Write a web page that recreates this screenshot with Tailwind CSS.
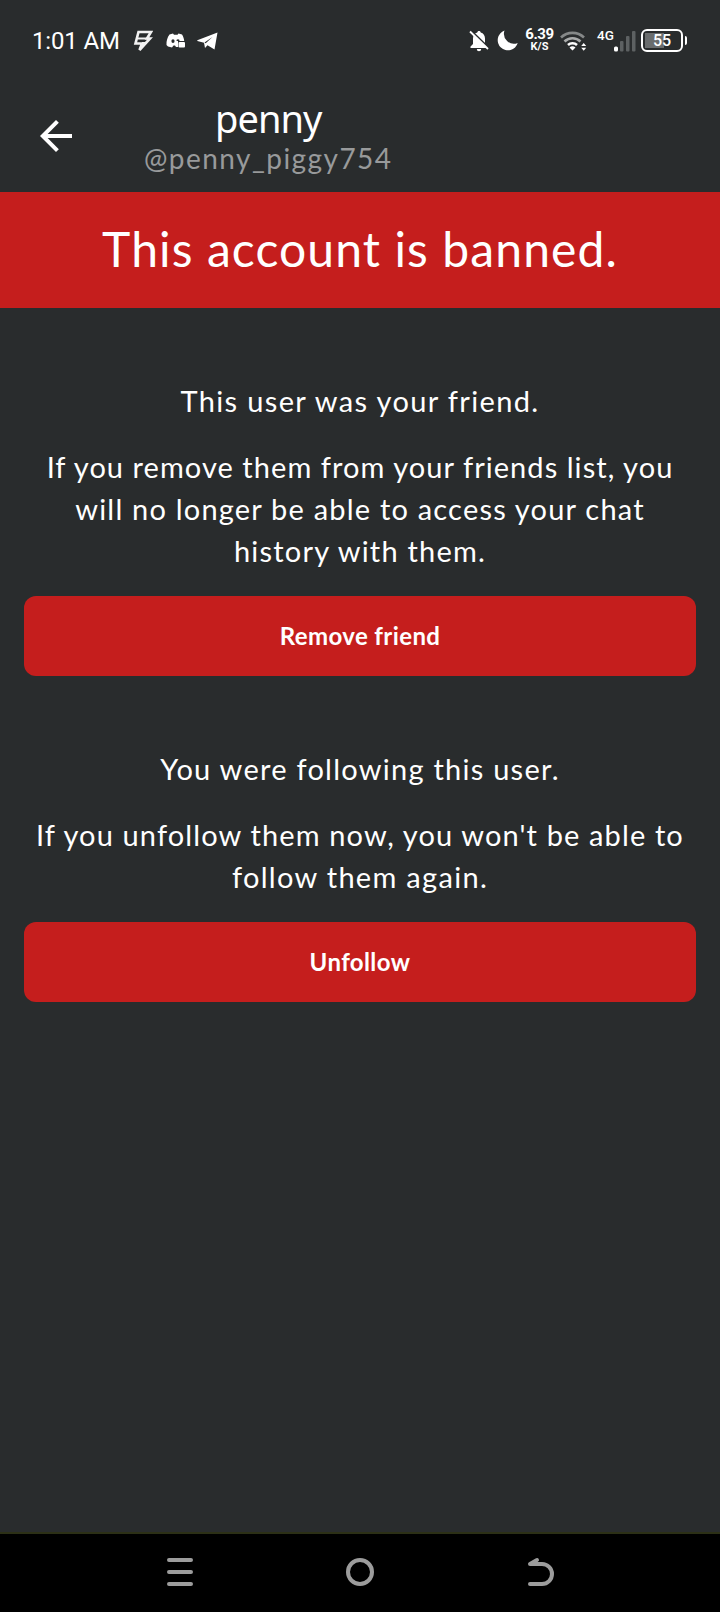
<!DOCTYPE html>
<html lang="en">
<head>
  <meta charset="UTF-8">
  <meta name="viewport" content="width=device-width, initial-scale=1.0">
  <title>penny</title>
  <script src="https://cdn.jsdelivr.net/npm/@tailwindcss/browser@4"></script>
</head>
<body class="bg-[#292c2d]">
  <div class="flex h-[1612px] w-[720px] flex-col overflow-hidden bg-[#292c2d] font-['Lato',sans-serif] text-white">

    <!-- Status bar -->
    <div class="flex h-20 shrink-0 items-center justify-between pt-px pr-[33px] pl-8 font-['Roboto',sans-serif]">
      <div class="flex items-center">
        <span class="w-[101px] pt-px text-2xl tracking-[-0.15px] whitespace-nowrap">1:01 AM</span>
        <svg class="h-[22px] w-5" viewBox="0 0 20 22" fill="none" stroke="#f2f2f2" stroke-width="2.6">
          <path d="M5.500 2H18l-4 6.500h3L6.500 20 9 13.500H2.500z" />
          <path d="M5 8.500h9M9 13h5" stroke-width="2.200" />
        </svg>
        <svg class="ml-[13px] h-4 w-5" viewBox="0 0 20 16" fill="#fff" fill-rule="evenodd">
          <path d="M3.500 1.500 7 .5l1 1.200h3.500l1-1.200 3.500 1c1.300 2 2 4.200 2.200 6.500h-6.200v6H10l-1-1.500H7.500L6 14.500 2 13.500.5 12C.3 8 1.300 4.500 3.500 1.500zM7 6.200a1.600 1.900 0 1 0 0 3.800 1.600 1.900 0 0 0 0-3.800zM12 6.200a1.500 1.500 0 0 0-1.500 1.800h3A1.500 1.500 0 0 0 12 6.200z" />
          <rect x="12.500" y="9" width="6.500" height="5.500" rx="1" />
        </svg>
        <svg class="ml-[11px] h-[18px] w-[21px]" viewBox="0 0 21 18" fill="#fff" fill-rule="evenodd">
          <path d="M20.500.5 17.500 17.500 10.500 13.300 8 16 7 10.800.3 9v-.8zM8.700 11.300 15.500 5 7.500 10.400z" />
        </svg>
      </div>

      <div class="flex items-center">
        <svg class="h-[22px] w-5" viewBox="0 0 20 22" fill="#fff">
          <path d="M10 1c1 0 1.700.6 1.700 1.500C14.500 3.300 16 5.500 16 8.500V14l2.500 2.500V18h-17v-1.500L4 14V8.500c0-3 1.500-5.200 4.300-6C8.300 1.600 9 1 10 1zM7.800 19h4.400a2.200 2.200 0 0 1-4.400 0z" />
          <path d="M2 .5 20 18" stroke="#292c2d" stroke-width="1.800" />
          <path d="M1 1.500 19 19" stroke="#fff" stroke-width="1.800" />
        </svg>
        <svg class="ml-2 h-[21px] w-[21px]" viewBox="0 0 21 21" fill="#fff">
          <path d="M7.500.5A10.200 10.200 0 1 0 20.700 13 10 10 0 0 1 7.500.5z" />
        </svg>
        <div class="-mt-[3px] ml-[7px] flex w-[29px] flex-col items-center font-bold">
          <span class="text-[15px] leading-[15px] tracking-[-0.4px]">6.39</span>
          <span class="text-[11px] leading-[10px]">K/S</span>
        </div>
        <svg class="ml-[6px] h-[22px] w-[27px]" viewBox="0 0 27 22" fill="none" stroke-width="2.600">
          <path d="M1 7.500a16.500 16.500 0 0 1 23 0" stroke="#858888" />
          <path d="M4.500 11.500a11.500 11.500 0 0 1 16 0" stroke="#a9abab" />
          <path d="M8 15a6.600 6.600 0 0 1 9 0" stroke="#fff" />
          <path d="m9.500 17.500 3 3 3-3a4.500 4.500 0 0 0-6 0zM21.200 16l2.500-3 2.500 3zM21.200 17.800l2.500 3 2.500-3z" fill="#fff" />
        </svg>
        <div class="ml-[10px] flex items-center">
          <span class="-mt-[11px] w-[17px] text-[13.5px] leading-4 font-medium">4G</span>
          <svg class="h-[22px] w-[22px]" viewBox="0 0 22 22">
            <rect x="0" y="16.500" width="4" height="5" rx="1.500" fill="#fff" />
            <g fill="#5d6162">
              <rect x="6" y="11" width="3.500" height="10.500" rx="1" />
              <rect x="12" y="6" width="3.500" height="15.500" rx="1" />
              <rect x="18" y="1" width="3.500" height="20.500" rx="1" />
            </g>
          </svg>
        </div>
        <div class="ml-[5px] flex items-center gap-[2px]">
          <div class="flex h-[23px] w-[42px] items-center justify-center rounded-[6px] border-2 border-white bg-[linear-gradient(#6a6d6e,#6a6d6e)] bg-size-[19px_15px] bg-position-[2px_2px] bg-no-repeat text-base leading-4 font-medium">55</div>
          <div class="h-[9px] w-[2px] rounded-r-sm bg-white"></div>
        </div>
      </div>
    </div>

    <!-- Header -->
    <header class="flex h-28 shrink-0 items-center pl-8">
      <svg class="size-12" viewBox="0 0 24 24" fill="#fff">
        <path d="M20 11H7.830l5.590-5.590L12 4l-8 8 8 8 1.410-1.410L7.830 13H20v-2z" />
      </svg>
      <div class="ml-[64px] text-center whitespace-nowrap">
        <h1 class="font-['Noto_Sans',sans-serif] text-[38px] leading-11 tracking-[-0.9px]">penny</h1>
        <p class="pt-px text-[28px] leading-[35px] tracking-[1.45px] text-[#989a9b]">@penny_piggy754</p>
      </div>
    </header>

    <div class="flex h-29 shrink-0 items-center justify-center bg-[#c51e1d] pb-[3px] text-5xl tracking-[1.1px] whitespace-nowrap">This account is banned.</div>

    <main class="flex-1 px-6 text-center text-[29px] leading-[42px] whitespace-nowrap">
      <section class="pt-18">
        <p class="tracking-[1.35px]">This user was your friend.</p>
        <p class="mt-6">
          <span class="block tracking-[1.05px]">If you remove them from your friends list, you</span>
          <span class="block tracking-[1.2px]">will no longer be able to access your chat</span>
          <span class="block tracking-[1.2px]">history with them.</span>
        </p>
        <button class="mt-6 block h-20 w-full rounded-xl bg-[#c51e1d] text-2xl font-bold tracking-[0.4px]">Remove friend</button>
      </section>

      <section class="pt-18">
        <p class="tracking-[1.25px]">You were following this user.</p>
        <p class="mt-6">
          <span class="block tracking-[1.13px]">If you unfollow them now, you won't be able to</span>
          <span class="block tracking-[1.3px]">follow them again.</span>
        </p>
        <button class="mt-6 block h-20 w-full rounded-xl bg-[#c51e1d] text-2xl font-bold tracking-[0.4px]">Unfollow</button>
      </section>
    </main>

    <!-- Navigation bar -->
    <nav class="flex h-20 shrink-0 items-start justify-between border-t-2 border-[#2c3016] bg-black px-[166px] pt-[23px]">
      <svg class="size-[30px]" viewBox="0 0 30 30" fill="none" stroke="#9c9c9c" stroke-width="4" stroke-linecap="round">
        <path d="M3 3h22M3 15h22M3 27h22" />
      </svg>
      <svg class="size-[30px]" viewBox="0 0 30 30" fill="none" stroke="#9c9c9c" stroke-width="4">
        <circle cx="15" cy="15" r="12" />
      </svg>
      <svg class="size-[30px]" viewBox="0 0 30 30" fill="none" stroke="#9c9c9c" stroke-width="4" stroke-linecap="round" stroke-linejoin="round">
        <path d="M6 27h12a10 10 0 0 0 0-20H6l7-4" />
      </svg>
    </nav>
  </div>
</body>
</html>
